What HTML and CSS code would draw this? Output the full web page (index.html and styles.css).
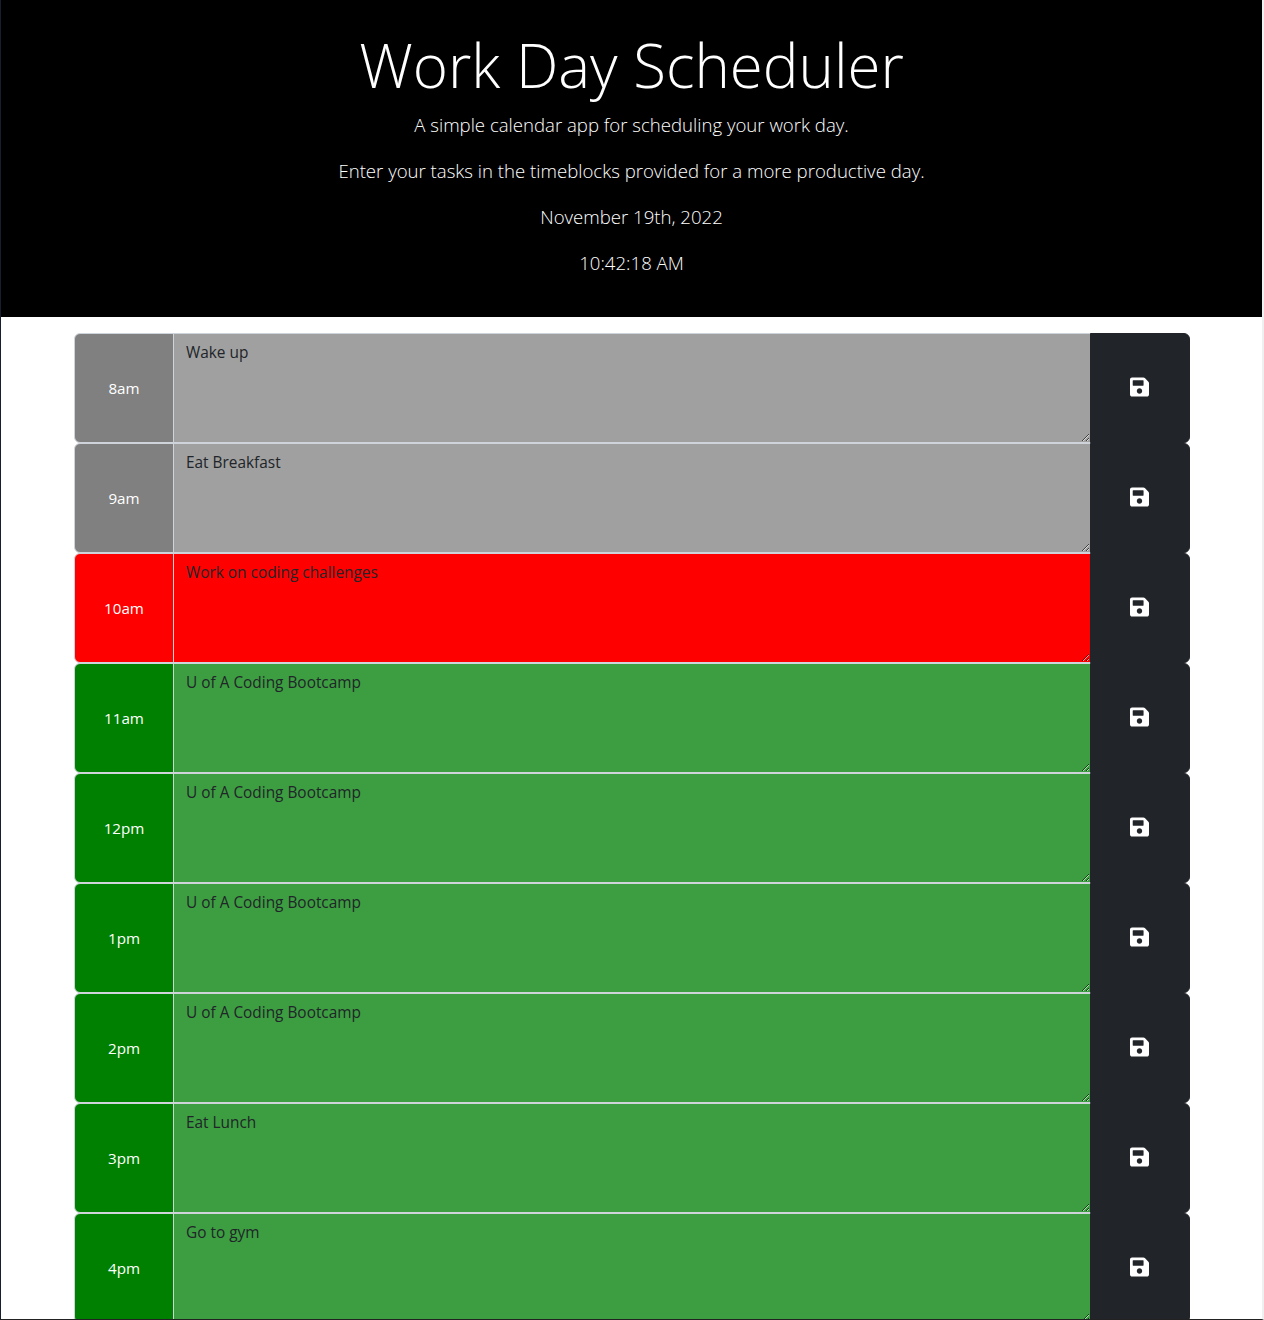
FILE: index.html
```html
<!DOCTYPE html>
<html lang="en">
<head>
<meta charset="utf-8">
<title>Work Day Scheduler</title>
<link rel="stylesheet" href="styles.css">
</head>
<body>
<div class="page">
<header class="jumbotron">
  <h1 class="title">Work Day Scheduler</h1>
  <p class="lead">A simple calendar app for scheduling your work day.</p>
  <p class="lead">Enter your tasks in the timeblocks provided for a more productive day.</p>
  <p class="lead">November 19th, 2022</p>
  <p class="lead">10:42:18 AM</p>
</header>
<main class="container">
  <div class="row past"><div class="hour">8am</div><textarea class="task">Wake up</textarea><button class="save"><svg class="icon" viewBox="0 0 448 512"><path fill="currentColor" d="M433.9 129.9l-83.9-83.9A48 48 0 0 0 316.1 32H48C21.5 32 0 53.5 0 80v352c0 26.5 21.5 48 48 48h352c26.5 0 48-21.5 48-48V163.9a48 48 0 0 0-14.1-34zM224 416c-35.3 0-64-28.7-64-64 0-35.3 28.7-64 64-64s64 28.7 64 64c0 35.3-28.7 64-64 64zm96-304.5V212c0 6.6-5.4 12-12 12H76c-6.6 0-12-5.4-12-12V108c0-6.6 5.4-12 12-12h228.5c3.2 0 6.2 1.3 8.5 3.5l3.5 3.5A12 12 0 0 1 320 111.5z"/></svg></button></div>
  <div class="row past"><div class="hour">9am</div><textarea class="task">Eat Breakfast</textarea><button class="save"><svg class="icon" viewBox="0 0 448 512"><path fill="currentColor" d="M433.9 129.9l-83.9-83.9A48 48 0 0 0 316.1 32H48C21.5 32 0 53.5 0 80v352c0 26.5 21.5 48 48 48h352c26.5 0 48-21.5 48-48V163.9a48 48 0 0 0-14.1-34zM224 416c-35.3 0-64-28.7-64-64 0-35.3 28.7-64 64-64s64 28.7 64 64c0 35.3-28.7 64-64 64zm96-304.5V212c0 6.6-5.4 12-12 12H76c-6.6 0-12-5.4-12-12V108c0-6.6 5.4-12 12-12h228.5c3.2 0 6.2 1.3 8.5 3.5l3.5 3.5A12 12 0 0 1 320 111.5z"/></svg></button></div>
  <div class="row present"><div class="hour">10am</div><textarea class="task">Work on coding challenges</textarea><button class="save"><svg class="icon" viewBox="0 0 448 512"><path fill="currentColor" d="M433.9 129.9l-83.9-83.9A48 48 0 0 0 316.1 32H48C21.5 32 0 53.5 0 80v352c0 26.5 21.5 48 48 48h352c26.5 0 48-21.5 48-48V163.9a48 48 0 0 0-14.1-34zM224 416c-35.3 0-64-28.7-64-64 0-35.3 28.7-64 64-64s64 28.7 64 64c0 35.3-28.7 64-64 64zm96-304.5V212c0 6.6-5.4 12-12 12H76c-6.6 0-12-5.4-12-12V108c0-6.6 5.4-12 12-12h228.5c3.2 0 6.2 1.3 8.5 3.5l3.5 3.5A12 12 0 0 1 320 111.5z"/></svg></button></div>
  <div class="row future"><div class="hour">11am</div><textarea class="task">U of A Coding Bootcamp</textarea><button class="save"><svg class="icon" viewBox="0 0 448 512"><path fill="currentColor" d="M433.9 129.9l-83.9-83.9A48 48 0 0 0 316.1 32H48C21.5 32 0 53.5 0 80v352c0 26.5 21.5 48 48 48h352c26.5 0 48-21.5 48-48V163.9a48 48 0 0 0-14.1-34zM224 416c-35.3 0-64-28.7-64-64 0-35.3 28.7-64 64-64s64 28.7 64 64c0 35.3-28.7 64-64 64zm96-304.5V212c0 6.6-5.4 12-12 12H76c-6.6 0-12-5.4-12-12V108c0-6.6 5.4-12 12-12h228.5c3.2 0 6.2 1.3 8.5 3.5l3.5 3.5A12 12 0 0 1 320 111.5z"/></svg></button></div>
  <div class="row future"><div class="hour">12pm</div><textarea class="task">U of A Coding Bootcamp</textarea><button class="save"><svg class="icon" viewBox="0 0 448 512"><path fill="currentColor" d="M433.9 129.9l-83.9-83.9A48 48 0 0 0 316.1 32H48C21.5 32 0 53.5 0 80v352c0 26.5 21.5 48 48 48h352c26.5 0 48-21.5 48-48V163.9a48 48 0 0 0-14.1-34zM224 416c-35.3 0-64-28.7-64-64 0-35.3 28.7-64 64-64s64 28.7 64 64c0 35.3-28.7 64-64 64zm96-304.5V212c0 6.6-5.4 12-12 12H76c-6.6 0-12-5.4-12-12V108c0-6.6 5.4-12 12-12h228.5c3.2 0 6.2 1.3 8.5 3.5l3.5 3.5A12 12 0 0 1 320 111.5z"/></svg></button></div>
  <div class="row future"><div class="hour">1pm</div><textarea class="task">U of A Coding Bootcamp</textarea><button class="save"><svg class="icon" viewBox="0 0 448 512"><path fill="currentColor" d="M433.9 129.9l-83.9-83.9A48 48 0 0 0 316.1 32H48C21.5 32 0 53.5 0 80v352c0 26.5 21.5 48 48 48h352c26.5 0 48-21.5 48-48V163.9a48 48 0 0 0-14.1-34zM224 416c-35.3 0-64-28.7-64-64 0-35.3 28.7-64 64-64s64 28.7 64 64c0 35.3-28.7 64-64 64zm96-304.5V212c0 6.6-5.4 12-12 12H76c-6.6 0-12-5.4-12-12V108c0-6.6 5.4-12 12-12h228.5c3.2 0 6.2 1.3 8.5 3.5l3.5 3.5A12 12 0 0 1 320 111.5z"/></svg></button></div>
  <div class="row future"><div class="hour">2pm</div><textarea class="task">U of A Coding Bootcamp</textarea><button class="save"><svg class="icon" viewBox="0 0 448 512"><path fill="currentColor" d="M433.9 129.9l-83.9-83.9A48 48 0 0 0 316.1 32H48C21.5 32 0 53.5 0 80v352c0 26.5 21.5 48 48 48h352c26.5 0 48-21.5 48-48V163.9a48 48 0 0 0-14.1-34zM224 416c-35.3 0-64-28.7-64-64 0-35.3 28.7-64 64-64s64 28.7 64 64c0 35.3-28.7 64-64 64zm96-304.5V212c0 6.6-5.4 12-12 12H76c-6.6 0-12-5.4-12-12V108c0-6.6 5.4-12 12-12h228.5c3.2 0 6.2 1.3 8.5 3.5l3.5 3.5A12 12 0 0 1 320 111.5z"/></svg></button></div>
  <div class="row future"><div class="hour">3pm</div><textarea class="task">Eat Lunch</textarea><button class="save"><svg class="icon" viewBox="0 0 448 512"><path fill="currentColor" d="M433.9 129.9l-83.9-83.9A48 48 0 0 0 316.1 32H48C21.5 32 0 53.5 0 80v352c0 26.5 21.5 48 48 48h352c26.5 0 48-21.5 48-48V163.9a48 48 0 0 0-14.1-34zM224 416c-35.3 0-64-28.7-64-64 0-35.3 28.7-64 64-64s64 28.7 64 64c0 35.3-28.7 64-64 64zm96-304.5V212c0 6.6-5.4 12-12 12H76c-6.6 0-12-5.4-12-12V108c0-6.6 5.4-12 12-12h228.5c3.2 0 6.2 1.3 8.5 3.5l3.5 3.5A12 12 0 0 1 320 111.5z"/></svg></button></div>
  <div class="row future"><div class="hour">4pm</div><textarea class="task">Go to gym</textarea><button class="save"><svg class="icon" viewBox="0 0 448 512"><path fill="currentColor" d="M433.9 129.9l-83.9-83.9A48 48 0 0 0 316.1 32H48C21.5 32 0 53.5 0 80v352c0 26.5 21.5 48 48 48h352c26.5 0 48-21.5 48-48V163.9a48 48 0 0 0-14.1-34zM224 416c-35.3 0-64-28.7-64-64 0-35.3 28.7-64 64-64s64 28.7 64 64c0 35.3-28.7 64-64 64zm96-304.5V212c0 6.6-5.4 12-12 12H76c-6.6 0-12-5.4-12-12V108c0-6.6 5.4-12 12-12h228.5c3.2 0 6.2 1.3 8.5 3.5l3.5 3.5A12 12 0 0 1 320 111.5z"/></svg></button></div>
</main>
</div>
</body>
</html>
```
FILE: styles.css
```css
* { box-sizing: border-box; }
html, body { margin: 0; height: 1320px; overflow: hidden; }
body { font-family: "Open Sans", "Noto Sans", sans-serif; color: #212529; background: #fff; }
.page { height: 1320px; overflow: hidden; border-left: 1px solid #1a1d2b; border-right: 2px solid #f0f0f0; border-bottom: 1px solid #222; }
.jumbotron { height: 317px; background: #000; color: #fff; text-align: center; padding-top: 29px; font-weight: 300; }
.title { margin: 0 0 9px; font-size: 60px; line-height: 72px; font-weight: 300; }
.lead { margin: 0 0 16px; font-size: 18.6px; line-height: 30px; font-weight: 300; }
.container { width: 1116px; margin: 16px 0 0 73px; }
.row { display: flex; height: 110px; }
.hour { width: 100px; flex: none; display: flex; align-items: center; justify-content: center; color: #fff; font-size: 15.2px; border: 1px solid #ced4da; border-radius: 6px 0 0 6px; }
.task { flex: 1; min-width: 0; height: 110px; margin: 0 0 0 -1px; padding: 7px 12px 5px; font: inherit; font-size: 15.4px; line-height: 24px; color: #212529; border: 1px solid #ced4da; border-radius: 0; outline: 0; }
.save { width: 100px; flex: none; margin-left: -1px; display: flex; align-items: center; justify-content: center; background: #212529; color: #fff; border: 1px solid #212529; border-radius: 0 6px 6px 0; padding: 0; }
.icon { width: 19px; height: 22px; margin: 0 1px 2px 0; }
.past .hour { background: #808080; }
.past .task { background: #a0a0a0; }
.present .hour, .present .task { background: #f00; }
.future .hour { background: #008000; }
.future .task { background: #3d9e41; }
```
